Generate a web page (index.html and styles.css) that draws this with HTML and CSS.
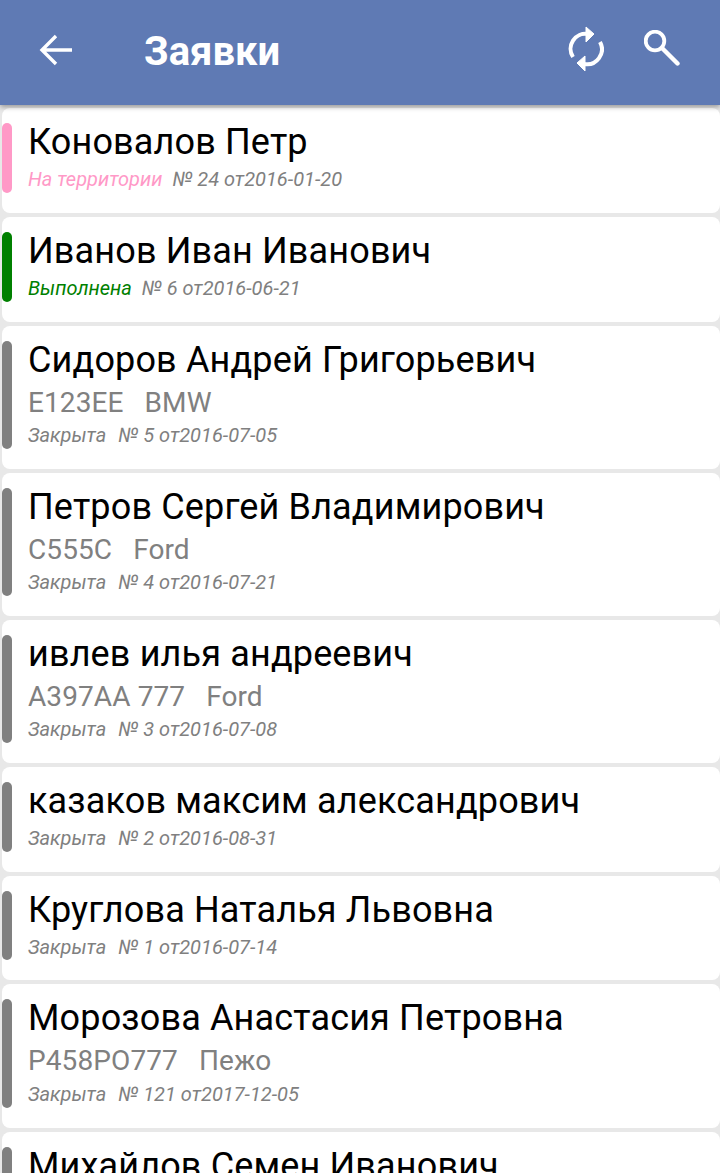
FILE: index.html
```html
<!DOCTYPE html>
<html lang="ru">
<head>
    <meta charset="UTF-8">
    <meta name="viewport" content="width=device-width, initial-scale=1.0">
    <title>Заявки</title>
    <link rel="stylesheet" href="styles.css">
</head>
<body>

    <header class="toolbar">
        <svg class="back-icon" viewBox="0 0 34 32" width="34" height="32">
            <path d="M33 16H3M17 2 3 16l14 14" fill="none" stroke="#fff" stroke-width="3.4"/>
        </svg>
        <h1 class="title">Заявки</h1>
        <svg class="refresh-icon" viewBox="0 0 36 46" width="36" height="46">
            <path d="M5 31A15 15 0 0 1 20 8M32 16A15 15 0 0 1 16 38" fill="none" stroke="#fff" stroke-width="4"/>
            <path d="M18 1l8 7-8 8zM17 30v15l-8-8z" fill="#fff" stroke="#fff" stroke-linejoin="round"/>
        </svg>
        <svg class="search-icon" viewBox="0 0 36 36" width="36" height="36">
            <circle cx="11" cy="11" r="9.300" fill="none" stroke="#fff" stroke-width="3.800"/>
            <path d="M18 18 33.500 33.500" fill="none" stroke="#fff" stroke-width="4.400" stroke-linecap="round"/>
        </svg>
    </header>

    <main class="list">
        <div class="card">
            <span class="mark pink"></span>
            <div class="name">Коновалов Петр</div>
            <div class="info"><span class="status pink-text">На территории</span><span>№ 24 от2016-01-20</span></div>
        </div>
        <div class="card">
            <span class="mark green"></span>
            <div class="name">Иванов Иван Иванович</div>
            <div class="info"><span class="status green-text">Выполнена</span><span>№ 6 от2016-06-21</span></div>
        </div>
        <div class="card">
            <span class="mark"></span>
            <div class="name">Сидоров Андрей Григорьевич</div>
            <div class="car"><span>E123EE</span><span>BMW</span></div>
            <div class="info closed"><span class="status">Закрыта</span><span>№ 5 от2016-07-05</span></div>
        </div>
        <div class="card">
            <span class="mark"></span>
            <div class="name">Петров Сергей Владимирович</div>
            <div class="car"><span>C555C</span><span>Ford</span></div>
            <div class="info closed"><span class="status">Закрыта</span><span>№ 4 от2016-07-21</span></div>
        </div>
        <div class="card">
            <span class="mark"></span>
            <div class="name">ивлев илья андреевич</div>
            <div class="car"><span>А397АА 777</span><span>Ford</span></div>
            <div class="info closed"><span class="status">Закрыта</span><span>№ 3 от2016-07-08</span></div>
        </div>
        <div class="card">
            <span class="mark"></span>
            <div class="name">казаков максим александрович</div>
            <div class="info closed"><span class="status">Закрыта</span><span>№ 2 от2016-08-31</span></div>
        </div>
        <div class="card">
            <span class="mark"></span>
            <div class="name">Круглова Наталья Львовна</div>
            <div class="info closed"><span class="status">Закрыта</span><span>№ 1 от2016-07-14</span></div>
        </div>
        <div class="card">
            <span class="mark"></span>
            <div class="name">Морозова Анастасия Петровна</div>
            <div class="car"><span>Р458РО777</span><span>Пежо</span></div>
            <div class="info closed"><span class="status">Закрыта</span><span>№ 121 от2017-12-05</span></div>
        </div>
        <div class="card">
            <span class="mark"></span>
            <div class="name">Михайлов Семен Иванович</div>
        </div>
    </main>

</body>
</html>
```

FILE: styles.css
```css
html, body {
    height: 100%;
    overflow: hidden;
}
body {
    margin: 0;
    font-family: Roboto, sans-serif;
    background-color: #e8e8e8;
}
.toolbar {
    position: relative;
    z-index: 1;
    display: flex;
    align-items: center;
    height: 105px;
    background: #5f7ab4;
    box-shadow: 0 2px 5px rgba(0, 0, 0, 0.35);
}
.back-icon {
    flex: none;
    margin: -6px 0 0 39px;
}
.title {
    flex: 1;
    margin: -3px 0 0 71px;
    color: white;
    font-size: 40px;
    font-weight: bold;
}
.refresh-icon {
    flex: none;
    margin: -7px 0 0 0;
}
.search-icon {
    flex: none;
    margin: -9px 40px 0 40px;
}
.list {
    display: flex;
    flex-direction: column;
    gap: 4px;
    padding: 3.4px 0 0 2px;
}
.card {
    position: relative;
    flex: none;
    padding: 13px 0 20.700px 26px;
    background: white;
    border-radius: 8px;
}
.mark {
    position: absolute;
    left: 0;
    top: 15px;
    bottom: 20px;
    width: 10px;
    border-radius: 5px;
    background: #808080;
}
.mark.pink {
    background: #ff99c7;
}
.mark.green {
    background: #008000;
}
.name {
    color: black;
    font-size: 36px;
    letter-spacing: 0.15px;
    line-height: 42px;
    white-space: nowrap;
}
.car {
    display: flex;
    gap: 21px;
    margin-top: 3px;
    color: #808080;
    font-size: 28px;
    letter-spacing: 0.1px;
    line-height: 37.400px;
}
.info {
    display: flex;
    gap: 10px;
    margin-top: 3px;
    color: #808080;
    font-size: 20px;
    font-style: italic;
    line-height: 26px;
}
.car + .info {
    margin-top: 1px;
}
.info.closed {
    gap: 12px;
}
.pink-text {
    color: #ff99c7;
}
.green-text {
    color: #008000;
}
```
